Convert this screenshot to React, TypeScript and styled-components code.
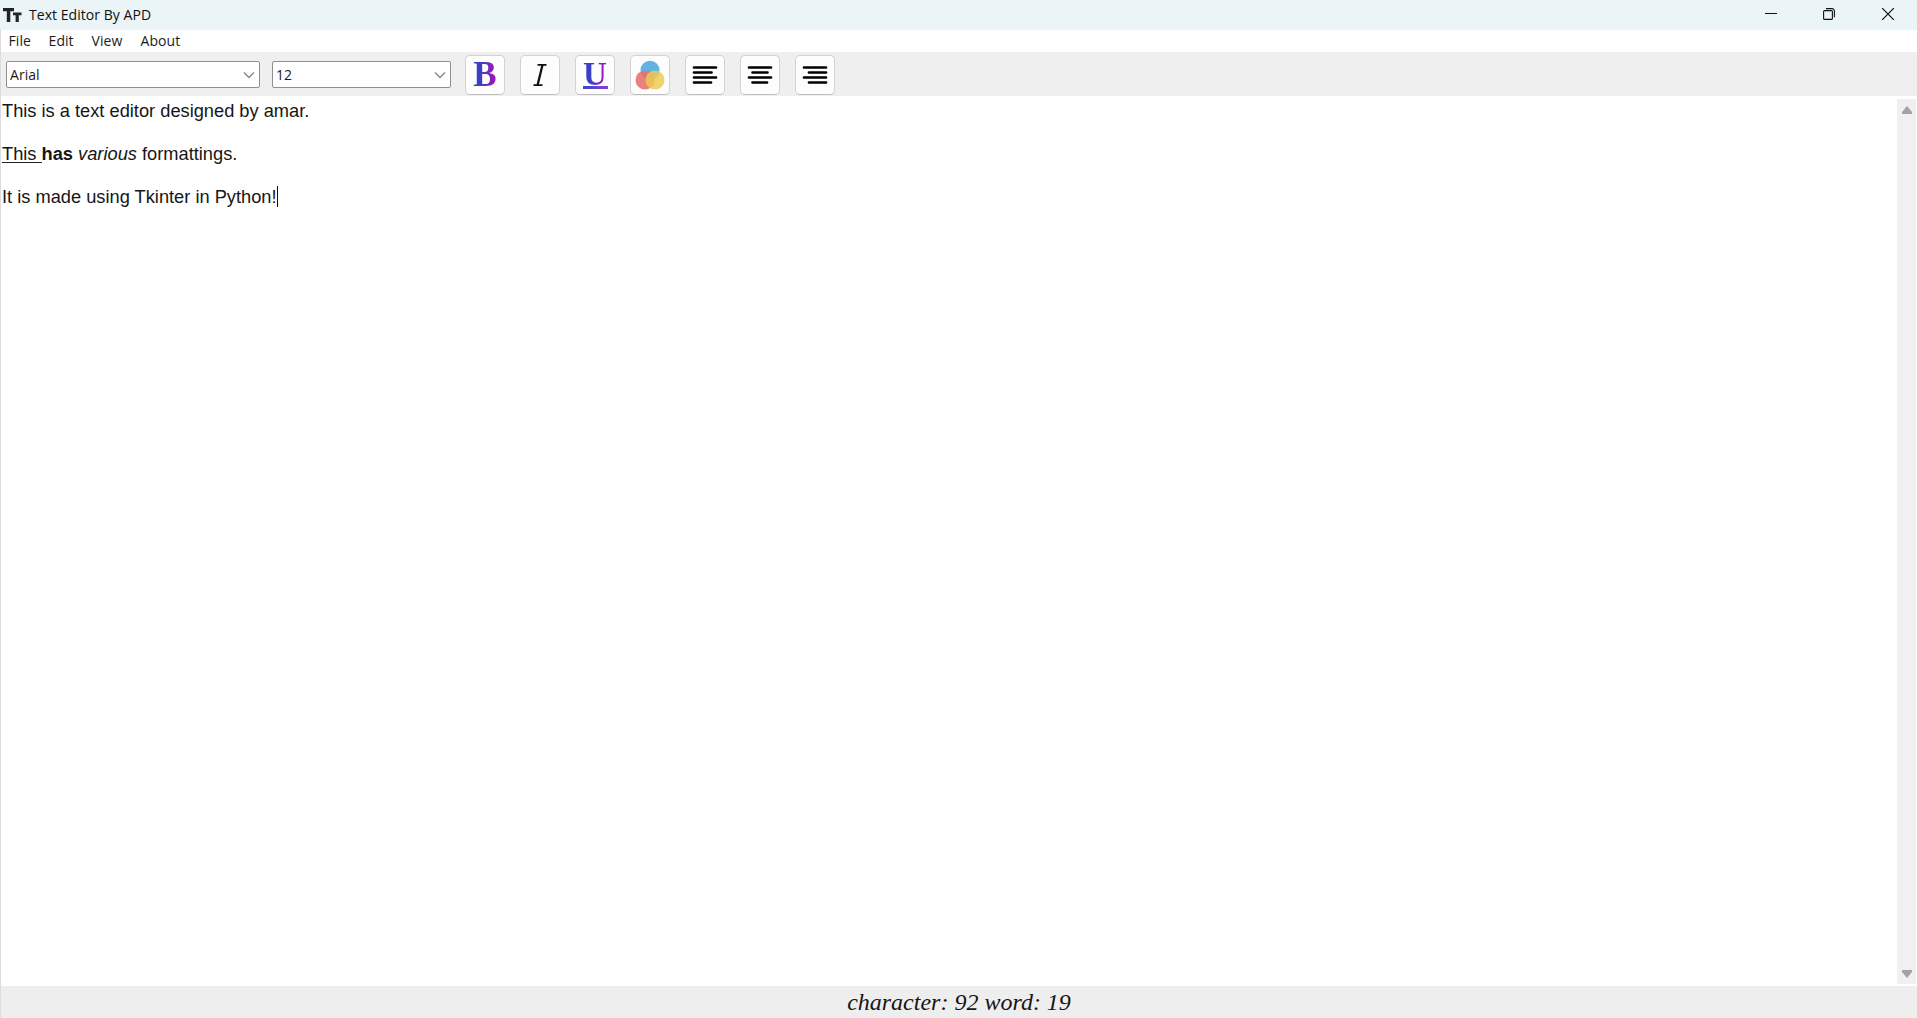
import React from "react";
import styled, { createGlobalStyle } from "styled-components";

const GlobalStyle = createGlobalStyle`
  * { box-sizing: border-box; }
  html, body { margin: 0; padding: 0; overflow: hidden; background: #fff; }
`;

const ui = `"Open Sans", "Noto Sans", sans-serif`;

const Window = styled.div`
  width: 100vw;
  height: 100vh;
  display: flex;
  flex-direction: column;
  background: #fff;
  border-left: 1px solid #dcdcdc;
  font-family: ${ui};
  color: #1b1b1b;
`;

const TitleBar = styled.header`
  height: 29px;
  flex: none;
  display: flex;
  align-items: center;
  margin-left: -1px;
  background: #ebf4f7;
`;

const AppIcon = styled.svg`
  width: 20px;
  height: 18px;
  margin-left: 2px;
  flex: none;
`;

const Title = styled.h1`
  margin: 0 0 0 7px;
  font-size: 14px;
  font-weight: 400;
  line-height: 20px;
  letter-spacing: 0.05px;
  white-space: nowrap;
  color: #111;
`;

const Controls = styled.div`
  margin-left: auto;
  display: flex;
  height: 100%;
`;

const Control = styled.button`
  width: 58.5px;
  height: 28px;
  padding: 0;
  border: 0;
  background: none;
  display: grid;
  place-items: center;
  svg { display: block; }
`;

const MenuBar = styled.nav`
  height: 23px;
  flex: none;
  display: flex;
  align-items: center;
  background: #fff;
  border-top: 1px solid #eef3f5;
  padding: 0 0 0 7.6px;
`;

const MenuItem = styled.span<{ $width: number }>`
  width: ${(p) => p.$width}px;
  font-size: 14px;
  line-height: 20px;
  letter-spacing: 0.05px;
  white-space: nowrap;
`;

const Toolbar = styled.div`
  height: 44px;
  flex: none;
  display: flex;
  align-items: flex-start;
  background: #efefef;
  padding: 3px 0 0 5px;
`;

const Select = styled.div<{ $width: number; $gap: number }>`
  width: ${(p) => p.$width}px;
  height: 27px;
  margin: 6px ${(p) => p.$gap}px 0 0;
  padding: 0 4px 0 3px;
  display: flex;
  align-items: center;
  justify-content: space-between;
  background: #fff;
  border: 1px solid #8f8f8f;
  border-radius: 2px;
  font-size: 14px;
  line-height: 20px;
  letter-spacing: 0.05px;
`;

const ToolGroup = styled.div`
  display: flex;
  gap: 15px;
`;

const Tool = styled.button`
  width: 40px;
  height: 40px;
  padding: 0;
  display: grid;
  place-items: center;
  background: #fdfdfd;
  border: 1px solid #d2d2d2;
  border-bottom-color: #bdbdbd;
  border-radius: 5px;
  svg { display: block; }
`;

const Letter = styled.span<{ $kind: "bold" | "underline" }>`
  display: block;
  height: 26px;
  font: 700 ${(p) => (p.$kind === "bold" ? 35 : 33)}px/26px "Liberation Serif", serif;
  background: linear-gradient(90deg, #3a3fc6 25%, #5a35c4 50%, #9518b6 85%);
  -webkit-background-clip: text;
  background-clip: text;
  color: transparent;
`;

const UnderlineMark = styled.span`
  display: flex;
  flex-direction: column;
  align-items: center;
  &::after {
    content: "";
    width: 25px;
    height: 3px;
    background: linear-gradient(90deg, #3548cf, #8a3fcb);
  }
  ${Letter} { height: 24px; line-height: 24px; }
`;

const Main = styled.main`
  flex: 1;
  min-height: 0;
  display: flex;
  justify-content: space-between;
`;

const Page = styled.div`
  padding: 3.5px 0 0 1px;
  font: 18.25px/21.5px "Liberation Sans", Arial, sans-serif;
  color: #161616;
`;

const Line = styled.p`
  margin: 0;
  height: 21.5px;
  white-space: pre;
  display: flex;
`;

const Underlined = styled.span`
  height: 20px;
  border-bottom: 1px solid #222;
`;

const Caret = styled.span`
  width: 1px;
  height: 21px;
  background: #111;
`;

const Scrollbar = styled.div`
  width: 19px;
  margin: 3px 1px 2px 0;
  background: #f0f0f0;
  display: flex;
  flex-direction: column;
  justify-content: space-between;
  align-items: center;
  padding: 7px 0 6px;
  svg { display: block; }
`;

const Status = styled.footer`
  height: 32px;
  flex: none;
  background: #eeeeee;
  text-align: center;
  font: italic 24px/32px "Liberation Serif", "Times New Roman", serif;
  color: #151515;
`;

const Chevron = () => (
  <svg width="12" height="8" viewBox="0 0 12 8" fill="none" stroke="#858585" strokeWidth="1.3">
    <path d="M1 1.5 6 6.5 11 1.5" />
  </svg>
);

const AlignIcon = ({ bars }: { bars: [number, number][] }) => (
  <svg width="26" height="20" viewBox="0 0 26 20" stroke="#000" strokeWidth="2.6" strokeLinecap="round">
    {bars.map(([a, b], i) => (
      <path key={i} d={`M${a} ${2.5 + i * 5}H${b}`} />
    ))}
  </svg>
);

const menus: [string, number][] = [["File", 40], ["Edit", 43], ["View", 49], ["About", 50]];

const aligns: [string, [number, number][]][] = [
  ["Align left", [[2, 24], [2, 19.5], [2, 24], [2, 19]]],
  ["Align center", [[2, 24], [5.5, 20.5], [2, 24], [5.5, 20]]],
  ["Align right", [[2, 24], [7, 24], [2, 24], [7, 24]]],
];

export default function App() {
  return (
    <>
      <GlobalStyle />
      <Window>
        <TitleBar>
          <AppIcon viewBox="0 0 20 18" fill="#242424">
            <path d="M1 2H12V5.3H8.3V16H4.8V5.3H1ZM11 6.5H19.5V9.3H16.8V16H13.6V9.3H11Z" />
          </AppIcon>
          <Title>Text Editor By APD</Title>
          <Controls>
            <Control aria-label="Minimize">
              <svg width="12" height="12" stroke="#111"><path d="M0 5.5H12" /></svg>
            </Control>
            <Control aria-label="Restore">
              <svg width="12" height="12" fill="none" stroke="#111" strokeWidth="1.1">
                <rect x=".6" y="2.6" width="8.8" height="8.8" rx="1" />
                <path d="M3 .6H9A2.4 2.4 0 0 1 11.4 3V9.3" />
              </svg>
            </Control>
            <Control aria-label="Close">
              <svg width="12" height="12" stroke="#111" strokeWidth="1.2"><path d="M0 0 12 12M12 0 0 12" /></svg>
            </Control>
          </Controls>
        </TitleBar>
        <MenuBar>
          {menus.map(([name, width]) => (
            <MenuItem key={name} $width={width}>{name}</MenuItem>
          ))}
        </MenuBar>
        <Toolbar>
          <Select $width={254} $gap={12}>Arial<Chevron /></Select>
          <Select $width={179} $gap={14}>12<Chevron /></Select>
          <ToolGroup>
            <Tool aria-label="Bold"><Letter $kind="bold">B</Letter></Tool>
            <Tool aria-label="Italic">
              <svg width="14" height="24" viewBox="0 0 14 24" fill="none" stroke="#111">
                <path d="M4.5 1.8H13.5M.5 22.2H9.5" strokeWidth="1.8" />
                <path d="M9.5 2 4.6 22" strokeWidth="2.3" />
              </svg>
            </Tool>
            <Tool aria-label="Underline">
              <UnderlineMark><Letter $kind="underline">U</Letter></UnderlineMark>
            </Tool>
            <Tool aria-label="Font color">
              <svg width="30" height="30" viewBox="0 0 30 30">
                <circle cx="15" cy="10.2" r="9.5" fill="#62b3e2" />
                <circle cx="10" cy="20" r="9.5" fill="#e8706a" fillOpacity=".88" />
                <circle cx="20" cy="20" r="9.5" fill="#edcb52" fillOpacity=".84" />
              </svg>
            </Tool>
            {aligns.map(([name, bars]) => (
              <Tool key={name} aria-label={name}><AlignIcon bars={bars} /></Tool>
            ))}
          </ToolGroup>
        </Toolbar>
        <Main>
          <Page>
            <Line>This is a text editor designed by amar.</Line>
            <Line />
            <Line><Underlined>This </Underlined><b>has </b><i>{"various "}</i><span>formattings.</span></Line>
            <Line />
            <Line>It is made using Tkinter in Python!<Caret /></Line>
          </Page>
          <Scrollbar>
            <svg width="10" height="8" fill="#a3a3a3"><path d="M5 0 10 6V8H0V6Z" /></svg>
            <svg width="10" height="8" fill="#a3a3a3"><path d="M5 8 10 2V0H0V2Z" /></svg>
          </Scrollbar>
        </Main>
        <Status>character: 92 word: 19</Status>
      </Window>
    </>
  );
}
